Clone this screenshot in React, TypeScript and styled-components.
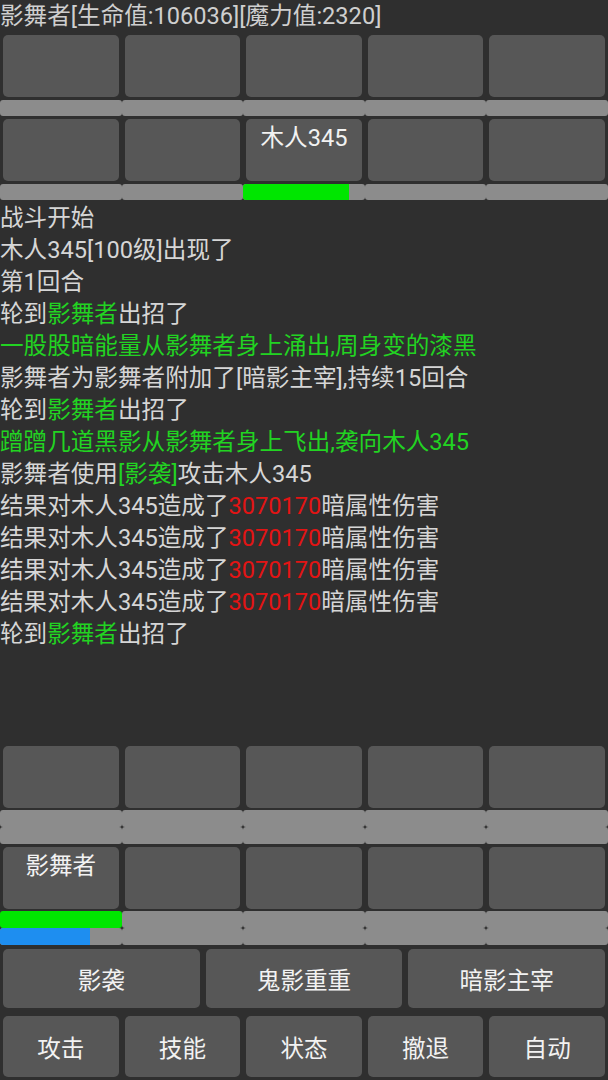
import React from "react";
import styled, { createGlobalStyle } from "styled-components";

const GlobalStyle = createGlobalStyle`
    html, body {
        margin: 0;
        padding: 0;
        background-color: #2f2f2f;
    }
    body {
        font-family: Roboto, "Noto Sans CJK SC", sans-serif;
    }
`;

const TEXT_SIZE = "23.6px";

const Screen = styled.div`
    width: 608px;
    height: 1080px;
    display: flex;
    flex-direction: column;
    background-color: #2f2f2f;
    overflow: hidden;
`;

const StatusLine = styled.div`
    height: 32px;
    line-height: 32px;
    font-size: ${TEXT_SIZE};
    color: #cfcfcf;
    white-space: nowrap;
`;

const Formation = styled.div`
    display: grid;
    grid-template-columns: repeat(5, 1fr);
`;

const Slot = styled.div`
    display: flex;
    flex-direction: column;
    padding-top: 3px;
`;

const Tile = styled.div`
    height: 62px;
    margin: 0 3px;
    border-radius: 5px;
    background-color: #575757;
    box-sizing: border-box;
    padding-top: 5px;
    text-align: center;
    font-size: ${TEXT_SIZE};
    line-height: 28px;
    color: #f2f2f2;
`;

const BarStack = styled.div<{ $gap: number }>`
    margin-top: ${(p) => p.$gap}px;
    display: flex;
    flex-direction: column;
`;

const Bar = styled.div<{ $h: number }>`
    height: ${(p) => p.$h}px;
    border-radius: 3px;
    background-color: #8c8c8c;
    overflow: hidden;
`;

const BarFill = styled.div<{ $color: string }>`
    height: 100%;
    background-color: ${(p) => p.$color};
`;

const BattleLog = styled.div`
    flex: 1;
    padding-top: 2px;
    font-size: ${TEXT_SIZE};
    line-height: 32px;
    color: #d6d6d6;
    white-space: nowrap;
    overflow: hidden;
`;

const LogLine = styled.div<{ $tone?: string }>`
    color: ${(p) => p.$tone ?? "inherit"};
`;

const Hl = styled.span<{ $tone: string }>`
    color: ${(p) => p.$tone};
`;

const SkillRow = styled.div`
    display: grid;
    grid-template-columns: repeat(3, 1fr);
    padding-top: 4px;
`;

const ActionRow = styled.div`
    display: grid;
    grid-template-columns: repeat(5, 1fr);
    padding: 8px 0 3px;
`;

const GameButton = styled.div<{ $h: number }>`
    height: ${(p) => p.$h}px;
    margin: 0 3px;
    border-radius: 5px;
    background-color: #575757;
    display: flex;
    align-items: center;
    justify-content: center;
    font-size: ${TEXT_SIZE};
    color: #f2f2f2;
`;

const GREEN = "#22d322";
const RED = "#e31414";
const HP = "#00e600";
const MP = "#1e8ef0";

type Unit = { name?: string; hp?: number; mp?: number };

const enemies: Unit[] = [
    {}, {}, {}, {}, {},
    {}, {}, { name: "木人345", hp: 87 }, {}, {},
];

const party: Unit[] = [
    {}, {}, {}, {}, {},
    { name: "影舞者", hp: 100, mp: 74 }, {}, {}, {}, {},
];

const Units = ({ units, withMp }: { units: Unit[]; withMp: boolean }) => (
    <Formation>
        {units.map((u, i) => (
            <Slot key={i}>
                <Tile>{u.name}</Tile>
                <BarStack $gap={withMp ? 2 : 3}>
                    <Bar $h={withMp ? 17 : 16}>
                        {u.hp !== undefined && <BarFill $color={HP} style={{ width: `${u.hp}%` }} />}
                    </Bar>
                    {withMp && (
                        <Bar $h={17}>
                            {u.mp !== undefined && <BarFill $color={MP} style={{ width: `${u.mp}%` }} />}
                        </Bar>
                    )}
                </BarStack>
            </Slot>
        ))}
    </Formation>
);

const hit = (
    <LogLine>
        结果对木人345造成了<Hl $tone={RED}>3070170</Hl>暗属性伤害
    </LogLine>
);

export default function App() {
    return (
        <Screen>
            <GlobalStyle />
            <StatusLine>影舞者[生命值:106036][魔力值:2320]</StatusLine>
            <Units units={enemies} withMp={false} />
            <BattleLog>
                <LogLine>战斗开始</LogLine>
                <LogLine>木人345[100级]出现了</LogLine>
                <LogLine>第1回合</LogLine>
                <LogLine>
                    轮到<Hl $tone={GREEN}>影舞者</Hl>出招了
                </LogLine>
                <LogLine $tone={GREEN}>一股股暗能量从影舞者身上涌出,周身变的漆黑</LogLine>
                <LogLine>影舞者为影舞者附加了[暗影主宰],持续15回合</LogLine>
                <LogLine>
                    轮到<Hl $tone={GREEN}>影舞者</Hl>出招了
                </LogLine>
                <LogLine $tone={GREEN}>蹭蹭几道黑影从影舞者身上飞出,袭向木人345</LogLine>
                <LogLine>
                    影舞者使用<Hl $tone={GREEN}>[影袭]</Hl>攻击木人345
                </LogLine>
                {hit}
                {hit}
                {hit}
                {hit}
                <LogLine>
                    轮到<Hl $tone={GREEN}>影舞者</Hl>出招了
                </LogLine>
            </BattleLog>
            <Units units={party} withMp />
            <SkillRow>
                {["影袭", "鬼影重重", "暗影主宰"].map((s) => (
                    <GameButton key={s} $h={59}>{s}</GameButton>
                ))}
            </SkillRow>
            <ActionRow>
                {["攻击", "技能", "状态", "撤退", "自动"].map((s) => (
                    <GameButton key={s} $h={61}>{s}</GameButton>
                ))}
            </ActionRow>
        </Screen>
    );
}
